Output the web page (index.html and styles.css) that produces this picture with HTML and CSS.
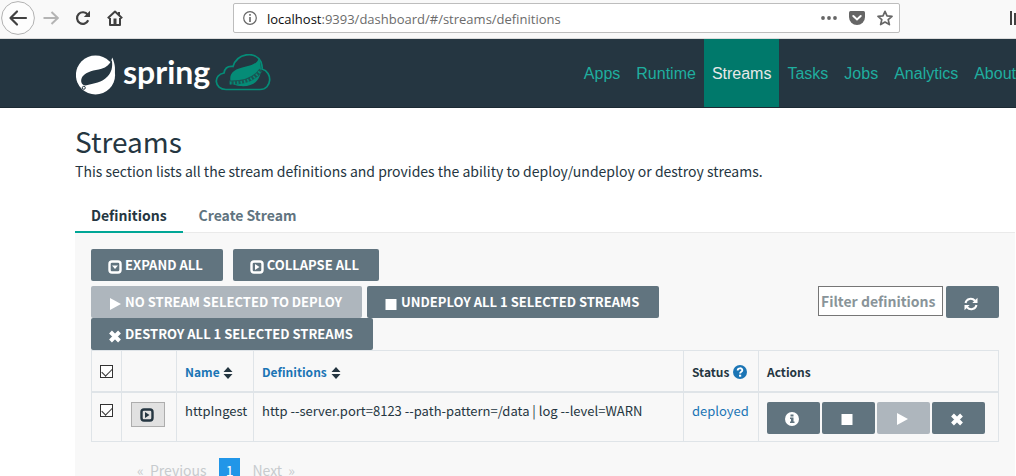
FILE: index.html
```html
<!DOCTYPE html>
<html lang="en">
<head>
<meta charset="utf-8">
<title>Streams</title>
<link rel="stylesheet" href="styles.css">
</head>
<body>
<svg class="sprite" aria-hidden="true">
  <symbol id="play" viewBox="0 0 14 14"><path d="M2 1 13 7 2 13Z" fill="currentColor"/></symbol>
  <symbol id="stop" viewBox="0 0 14 14"><path d="M1.5 2h11v11h-11Z" fill="currentColor"/></symbol>
  <symbol id="cross" viewBox="0 0 14 14"><path d="M2.5 3 11.5 12M11.5 3 2.5 12" stroke="currentColor" stroke-width="4"/></symbol>
  <symbol id="expand" viewBox="0 0 14 14"><rect x="1.500" y="1.500" width="11" height="11" rx="2.500" fill="none" stroke="currentColor" stroke-width="2.400"/><path d="M4 5.500h6L7 9Z" fill="currentColor"/></symbol>
  <symbol id="collapse" viewBox="0 0 14 14"><rect x="1.500" y="1.500" width="11" height="11" rx="2.500" fill="none" stroke="currentColor" stroke-width="2.400"/><path d="M5 4v6l4.500-3Z" fill="currentColor"/></symbol>
  <symbol id="sort" viewBox="0 0 10 14"><path d="M.5 6 5 1 9.500 6ZM.5 8h9L5 13Z" fill="currentColor"/></symbol>
  <symbol id="info" viewBox="0 0 14 14"><circle cx="7" cy="7" r="7" fill="currentColor"/><path d="M5.500 2.500h3v2h-3ZM5 5.500h3.500v4h1V11H5V9.500h1V7H5Z" fill="#61747f"/></symbol>
  <symbol id="help" viewBox="0 0 14 14"><circle cx="7" cy="7" r="7" fill="currentColor"/><path d="M4.700 5.500C4.700 2.600 9.300 2.700 9.300 5.200 9.300 6.900 7.100 6.700 7.100 8.600" fill="none" stroke="#fff" stroke-width="1.900"/><path d="M6 9.700h2.200v2H6Z" fill="#fff"/></symbol>
  <symbol id="refresh" viewBox="0 0 14 14"><path d="M1.500 6C2.500 1.500 8 .5 11 3.700M12.500 8C11.500 12.500 6 13.500 3 10.300" fill="none" stroke="currentColor" stroke-width="2"/><path d="M13.500.8V6H8.300ZM.5 13.200V8h5.200Z" fill="currentColor"/></symbol>
</svg>

<div class="toolbar">
  <button class="tool back" aria-label="Back"><svg viewBox="0 0 34 34" width="34" height="34"><circle cx="17" cy="17" r="16.400" fill="#fdfdfd" stroke="#b1b1b1"/><path d="M25 17H10M16 10.500 9.500 17 16 23.500" fill="none" stroke="#414141" stroke-width="2.200" stroke-linecap="round" stroke-linejoin="round"/></svg></button>
  <button class="tool" aria-label="Forward" disabled><svg viewBox="0 0 16 16" width="16" height="16"><path d="M.5 8H14M8.500 2 14.800 8l-6.300 6" fill="none" stroke="#b4b4b4" stroke-width="2"/></svg></button>
  <button class="tool" aria-label="Reload"><svg viewBox="0 0 16 16" width="16" height="16"><path d="M12.600 4.700A5.800 5.800 0 1 0 13.200 10.300" fill="none" stroke="#414141" stroke-width="2.200"/><path d="M15 .8V7H8.800Z" fill="#414141"/></svg></button>
  <button class="tool" aria-label="Home"><svg viewBox="0 0 16 16" width="16" height="16"><path d="M.8 8.300 8 1.500l7.200 6.800M3 8v7h10V8" fill="none" stroke="#414141" stroke-width="2" stroke-linejoin="round"/><path d="M11 2h2v4l-2-2ZM6.500 8.500h3V14h-3Z" fill="#414141"/></svg></button>
  <div class="address">
    <svg viewBox="0 0 14 14" width="14" height="14"><circle cx="7" cy="7" r="6.300" fill="none" stroke="#666" stroke-width="1.200"/><path d="M6.200 3h1.600v1.700H6.200ZM6.200 6h1.600v5H6.200Z" fill="#666"/></svg>
    <span class="url">localhost<span class="path">:9393/dashboard/#/streams/definitions</span></span>
    <button class="tool" aria-label="Page actions"><svg viewBox="0 0 16 16" width="16" height="16"><g fill="#666"><circle cx="2" cy="8" r="1.900"/><circle cx="8" cy="8" r="1.900"/><circle cx="14" cy="8" r="1.900"/></g></svg></button>
    <button class="tool" aria-label="Save to Pocket"><svg viewBox="0 0 16 16" width="16" height="16"><path d="M1.500 1h13Q16 1 16 2.500V7A8 8 0 0 1 0 7V2.500Q0 1 1.500 1Z" fill="#666"/><path d="M4.300 6 8 9.400 11.700 6" fill="none" stroke="#fff" stroke-width="2" stroke-linecap="round"/></svg></button>
    <button class="tool" aria-label="Bookmark"><svg viewBox="0 0 16 16" width="16" height="16"><path d="M8 1.300 10 5.800l5 .5-3.800 3.300L12.400 14.600 8 12l-4.400 2.600 1.200-5L1 6.300l5-.5Z" fill="none" stroke="#666" stroke-width="1.700" stroke-linejoin="round"/></svg></button>
  </div>
  <svg class="library" viewBox="0 0 6 16" width="6" height="16"><path d="M1 1v14M5 3v12" stroke="#414141" stroke-width="2"/></svg>
</div>

<header class="navbar">
  <a class="brand" href="#" aria-label="Spring Cloud Data Flow">
    <svg viewBox="0 0 196 42" width="196" height="42">
      <circle cx="19.500" cy="21" r="19.600" fill="#fff"/>
      <path d="M36.300 3.500C39.500 11 39.500 16 38 22L34 10Z" fill="#fff"/>
      <path d="M35.800 6C37 13 35.500 18.500 31.500 22.500 26 28.500 18 29.500 9.500 31.500 5 31.500 4 26 6.500 22.500 11 17 18 16.800 25.500 14.800 30.500 13.300 33.500 10.500 35.800 6Z" fill="#253641"/>
      <circle cx="7.800" cy="33.800" r="1.500" fill="#fff" stroke="#253641"/>
      <text class="wordmark" x="47" y="30">spring</text>
      <path d="M150 35.500c-12 0-13-15-2-16.500 1-6 5-7 9-6.500C161-.5 179-4 185 8c1 3 1.500 5 1 7 11 3 10 20.500-2 20.500Z" fill="none" stroke="#058c77" stroke-width="1.700"/>
      <path d="M183 4C181 10 176 11 170 12.500 158 15 153 19 154.500 27 154.500 29 158 31.500 164 32 180 33.500 189 23 183 4Z" fill="#058c77"/>
      <path d="M153 28.500C167 29 178 26 185 16" fill="none" stroke="#1a5553" stroke-width="4"/>
      <path d="M154 29C167 29.500 178 26 184.500 16.500" fill="none" stroke="#058c77" stroke-width="3" stroke-dasharray="1.500 2"/>
    </svg>
  </a>
  <nav class="menu">
    <a href="#">Apps</a><a href="#">Runtime</a><a href="#" class="current">Streams</a><a href="#">Tasks</a><a href="#">Jobs</a><a href="#">Analytics</a><a href="#">About</a>
  </nav>
</header>

<main class="page">
  <h1>Streams</h1>
  <p class="intro">This section lists all the stream definitions and provides the ability to deploy/undeploy or destroy streams.</p>
  <nav class="tabs"><a href="#" class="current">Definitions</a><a href="#">Create Stream</a></nav>
  <section class="panel">
    <div class="tree-actions">
      <button class="btn"><svg class="icon"><use href="#expand"/></svg>EXPAND ALL</button>
      <button class="btn"><svg class="icon"><use href="#collapse"/></svg>COLLAPSE ALL</button>
    </div>
    <div class="controls">
      <div class="bulk">
        <button class="btn" disabled><svg class="icon"><use href="#play"/></svg>NO STREAM SELECTED TO DEPLOY</button>
        <button class="btn"><svg class="icon"><use href="#stop"/></svg>UNDEPLOY ALL 1 SELECTED STREAMS</button>
        <button class="btn"><svg class="icon"><use href="#cross"/></svg>DESTROY ALL 1 SELECTED STREAMS</button>
      </div>
      <div class="search">
        <input class="filter" type="text" placeholder="Filter definitions" aria-label="Filter definitions">
        <button class="btn square" aria-label="Refresh"><svg class="icon"><use href="#refresh"/></svg></button>
      </div>
    </div>
    <table class="streams">
      <colgroup><col class="c-check"><col class="c-toggle"><col class="c-name"><col><col class="c-status"><col class="c-actions"></colgroup>
      <thead>
        <tr>
          <th><input type="checkbox" checked aria-label="Select all"></th>
          <th></th>
          <th><a href="#">Name</a> <svg class="sort"><use href="#sort"/></svg></th>
          <th><a href="#">Definitions</a> <svg class="sort"><use href="#sort"/></svg></th>
          <th>Status <svg class="help"><use href="#help"/></svg></th>
          <th>Actions</th>
        </tr>
      </thead>
      <tbody>
        <tr>
          <td><input type="checkbox" checked aria-label="Select httpIngest"></td>
          <td class="toggle-cell"><button class="toggle" aria-label="Expand httpIngest"><svg class="icon"><use href="#collapse"/></svg></button></td>
          <td>httpIngest</td>
          <td>http --server.port=8123 --path-pattern=/data | log --level=WARN</td>
          <td><a href="#">deployed</a></td>
          <td><div class="row-actions">
            <button class="btn square" aria-label="Details"><svg class="icon"><use href="#info"/></svg></button>
            <button class="btn square" aria-label="Undeploy"><svg class="icon"><use href="#stop"/></svg></button>
            <button class="btn square" aria-label="Deploy" disabled><svg class="icon"><use href="#play"/></svg></button>
            <button class="btn square" aria-label="Destroy"><svg class="icon"><use href="#cross"/></svg></button>
          </div></td>
        </tr>
      </tbody>
    </table>
    <nav class="pager" aria-label="Pages"><span>«&nbsp; Previous</span><a href="#" class="current">1</a><span>Next &nbsp;»</span></nav>
  </section>
</main>
</body>
</html>
```
FILE: styles.css
```css
* { box-sizing: border-box; }
html { height: 100%; overflow: hidden; }
body {
  margin: 0;
  height: 100%;
  overflow: hidden;
  background: #fff;
  color: #253641;
  font: 14px/24px "Noto Sans CJK SC", "Noto Sans", sans-serif;
}
a { color: #1b75b5; text-decoration: none; }
button { font: inherit; }
.sprite { display: none; }

.toolbar {
  display: flex;
  align-items: center;
  height: 39px;
  padding: 0 0 3px 1px;
  background: #f9f9f9;
  border-bottom: 1px solid #dcdcdc;
}
.tool { display: flex; flex: none; margin: 0 16px 0 0; padding: 0; border: 0; background: none; }
.tool.back { margin-right: 8px; }
.address {
  display: flex;
  align-items: center;
  flex: none;
  width: 66%;
  max-width: 667px;
  height: 30px;
  margin-left: 94px;
  padding: 0 6px 0 9px;
  background: #fff;
  border: 1px solid #bdbdbd;
  border-radius: 2px;
}
.address .tool { margin: 0 0 0 12px; }
.url { flex: 1; margin-left: 10px; padding-top: 2px; font: 13px/20px "Open Sans", sans-serif; color: #0c0c0d; }
.path { color: #6b6b6b; }
.library { flex: none; margin-left: auto; }

.navbar { display: flex; justify-content: space-between; height: 69px; padding-left: 76px; background: #253641; border-bottom: 1px solid #1c2a33; }
.brand { display: flex; align-items: center; padding-top: 4px; }
.wordmark { font: 700 32px Lato, sans-serif; fill: #fff; }
.menu { display: flex; font: 16px/70px "Liberation Sans", sans-serif; }
.menu a { height: 68px; padding: 0 8px; color: #1fae9f; }
.menu a:last-child { padding-right: 0; }
.menu .current { background: #00796b; color: #e8e8e8; }

.page { margin: 0 1px 0 75px; padding-top: 15px; }
h1 { margin: 0; font-size: 28px; line-height: 36px; font-weight: 400; }
.intro { margin: 0; }
.tabs { display: flex; margin-top: 12px; border-bottom: 1px solid #eaeaea; font-weight: 700; }
.tabs a { margin-bottom: -1px; padding: 8px 16px 4px; color: #61747f; border-bottom: 2px solid transparent; }
.tabs .current { color: #253641; border-color: #00a696; }

.panel { padding: 16px; background: #f8f8f8; }
.tree-actions { display: flex; gap: 10px; }
.btn {
  display: inline-flex;
  align-items: center;
  height: 32px;
  padding: 0 20px 0 17px;
  border: 0;
  border-radius: 2px;
  background: #61747f;
  color: #fff;
  font-size: 13px;
  font-weight: 700;
  white-space: nowrap;
}
.btn:disabled { background: #aeb6bd; }
.icon { width: 14px; height: 14px; margin: 3px 3px 0 0; }
.square { justify-content: center; width: 53px; padding: 0; }
.controls { display: flex; justify-content: space-between; margin-top: 5px; }
.bulk { display: flex; flex-wrap: wrap; flex: 1; gap: 0 5px; }
.search { display: flex; align-items: flex-start; gap: 3px; }
.filter { width: 125px; height: 30px; padding: 0 2px; border: 1px solid #767676; background: #fff; font: inherit; font-weight: 700; }
.filter::placeholder { color: #899499; opacity: 1; }

.streams { width: 100%; table-layout: fixed; border-collapse: collapse; font-size: 13px; line-height: 18px; }
.streams th, .streams td { padding: 9px 8px; border: 1px solid #dfe4e8; text-align: left; vertical-align: top; white-space: nowrap; }
.streams th { height: 41px; padding-top: 12px; border-bottom-width: 2px; font-size: 12px; font-weight: 700; }
.streams td { height: 50px; }
.streams .toggle-cell { padding-left: 9px; }
.streams td:last-child { padding-bottom: 0; }
.c-check { width: 30px; }
.c-toggle { width: 55px; }
.c-name { width: 77px; }
.c-status { width: 75px; }
.c-actions { width: 240px; }
.streams input {
  appearance: none;
  display: block;
  width: 13px;
  height: 13px;
  margin: 2px 0 0;
  border: 1px solid #333;
  background: #fff;
}
.streams input:checked::before {
  content: "";
  display: block;
  width: 9px;
  height: 5px;
  margin: 2px 1px;
  border: solid #333;
  border-width: 0 0 1px 1px;
  transform: rotate(-45deg);
}
.sort { width: 10px; height: 14px; margin-left: 1px; vertical-align: -3px; }
.help { width: 14px; height: 14px; margin-left: 1px; vertical-align: -2px; color: #1b75b5; }
.toggle { display: flex; align-items: center; justify-content: center; width: 34px; height: 25px; padding: 0; border: 1px solid #adadad; background: #e1e1e1; color: #253641; }
.toggle .icon { margin: 2px 2px 0 0; }
.row-actions { display: flex; gap: 2px; }

.pager { display: flex; gap: 12px; margin: 16px 0 0 46px; color: #c7cbce; font-size: 14px; line-height: 24px; }
.pager .current { padding: 0 7px; background: #2196e8; color: #fff; }
```
